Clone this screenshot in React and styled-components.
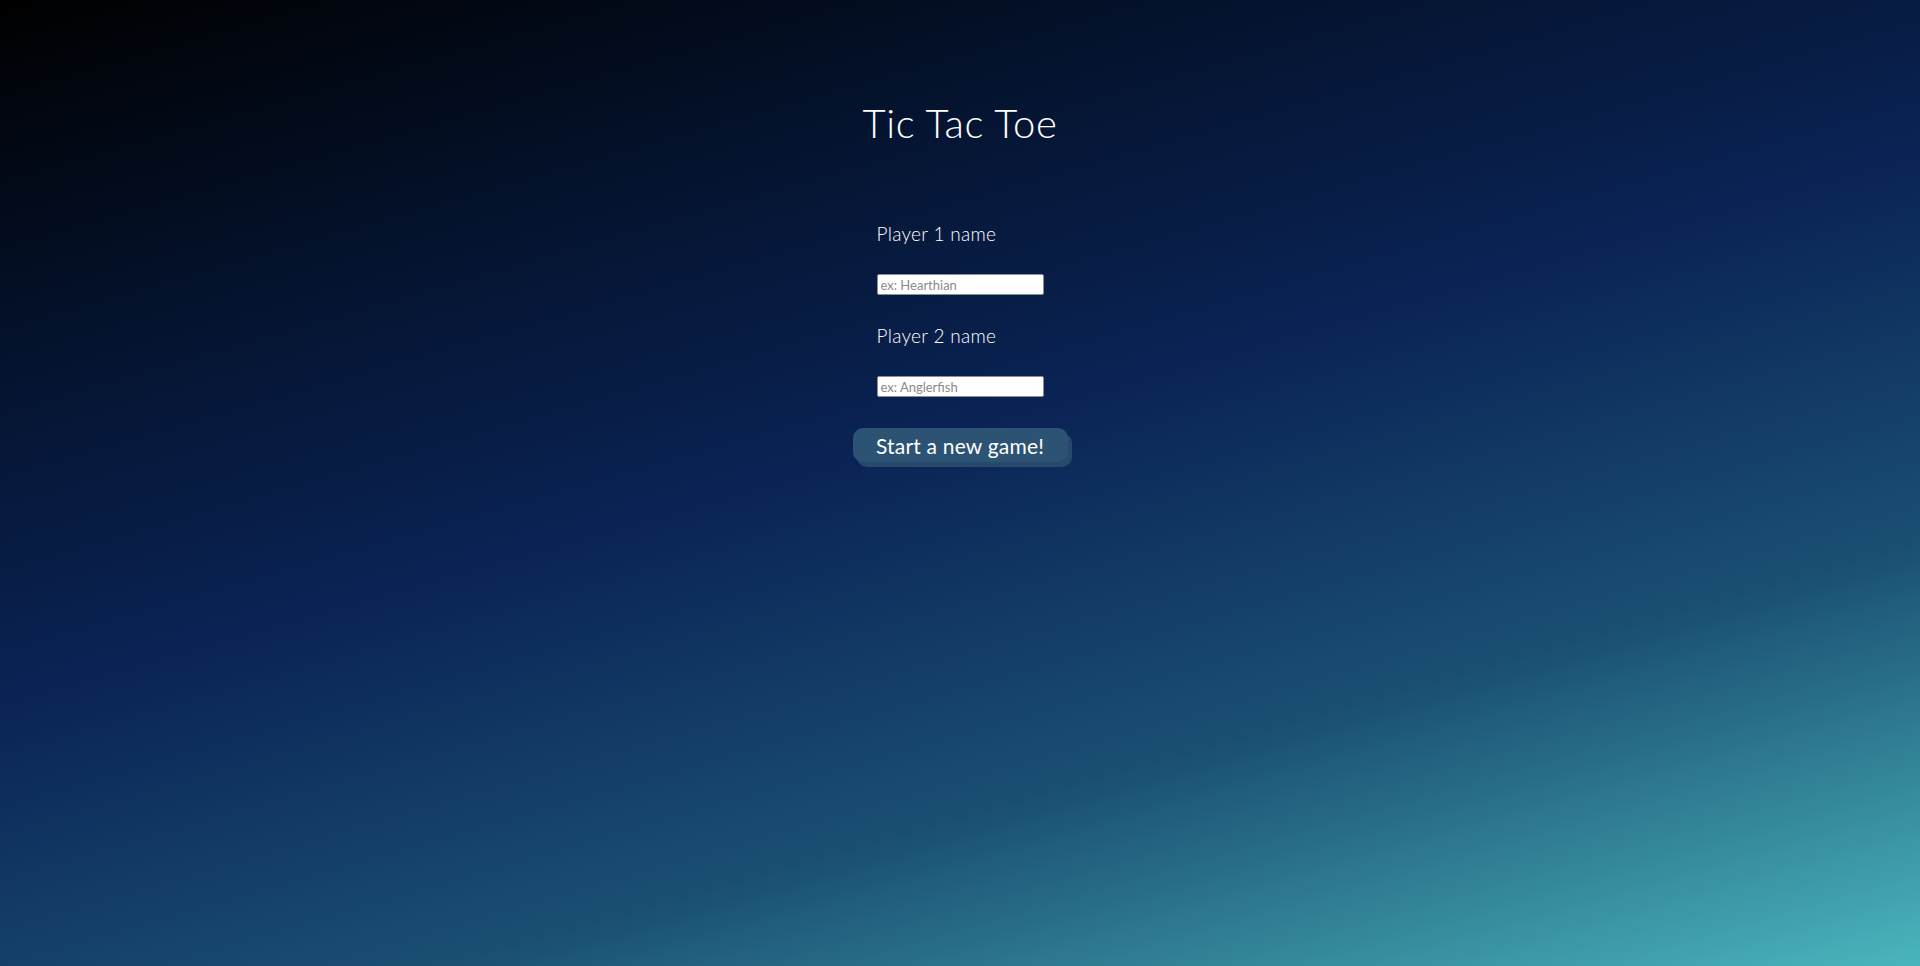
import React from "react";
import styled, { createGlobalStyle } from "styled-components";

const GlobalStyle = createGlobalStyle`
  html, body {
    margin: 0;
    padding: 0;
  }
  body {
    font-family: Lato, "Noto Sans", sans-serif;
    color: #ffffff;
  }
`;

const Page = styled.div`
  // 전체 배경 그라데이션
  min-height: 100vh;
  box-sizing: border-box;
  padding-top: 99px;
  display: flex;
  flex-direction: column;
  align-items: center;
  background: linear-gradient(
    164deg,
    #000000 0%,
    #04112a 22%,
    #0a2456 47%,
    #1a4f72 72%,
    #4ab5bd 100%
  );
`;

const Title = styled.h1`
  margin: 0;
  font-size: 40px;
  line-height: 48px;
  font-weight: 300;
  letter-spacing: 0.6px;
`;

const Form = styled.form`
  margin-top: 75px;
  display: flex;
  flex-direction: column;
  align-items: center;
`;

const Fields = styled.div`
  width: 167px;
  display: flex;
  flex-direction: column;
  gap: 29px;
`;

const Field = styled.div`
  display: flex;
  flex-direction: column;
  gap: 29px;
`;

const Label = styled.label`
  font-size: 19px;
  line-height: 23px;
  font-weight: 300;
  letter-spacing: 0.3px;
  color: #ffffff;
  white-space: nowrap;
`;

const NameInput = styled.input`
  box-sizing: border-box;
  width: 167px;
  height: 21px;
  padding: 1px 3px;
  border: 1px solid #8a8f98;
  border-radius: 2px;
  background: #ffffff;
  font-family: Lato, "Noto Sans", sans-serif;
  font-size: 13px;
  color: #222;
  &::placeholder {
    color: #8a8a8a;
  }
`;

const StartButton = styled.button`
  // 시작 버튼
  box-sizing: border-box;
  margin-top: 31px;
  width: 215px;
  height: 34px;
  border: none;
  border-radius: 10px;
  background-color: #2c5274;
  box-shadow: 4px 5px 0 #27496b;
  color: #ffffff;
  font-family: Lato, "Noto Sans", sans-serif;
  font-size: 21px;
  font-weight: 400;
  letter-spacing: 0.2px;
  cursor: pointer;
`;

function App() {
  return (
    <>
      <GlobalStyle />
      <Page>
        <Title>Tic Tac Toe</Title>
        <Form onSubmit={e => e.preventDefault()}>
          <Fields>
            <Field>
              <Label htmlFor="player1">Player 1 name</Label>
              <NameInput id="player1" type="text" placeholder="ex: Hearthian" />
            </Field>
            <Field>
              <Label htmlFor="player2">Player 2 name</Label>
              <NameInput id="player2" type="text" placeholder="ex: Anglerfish" />
            </Field>
          </Fields>
          <StartButton type="submit">Start a new game!</StartButton>
        </Form>
      </Page>
    </>
  );
}

export default App;
